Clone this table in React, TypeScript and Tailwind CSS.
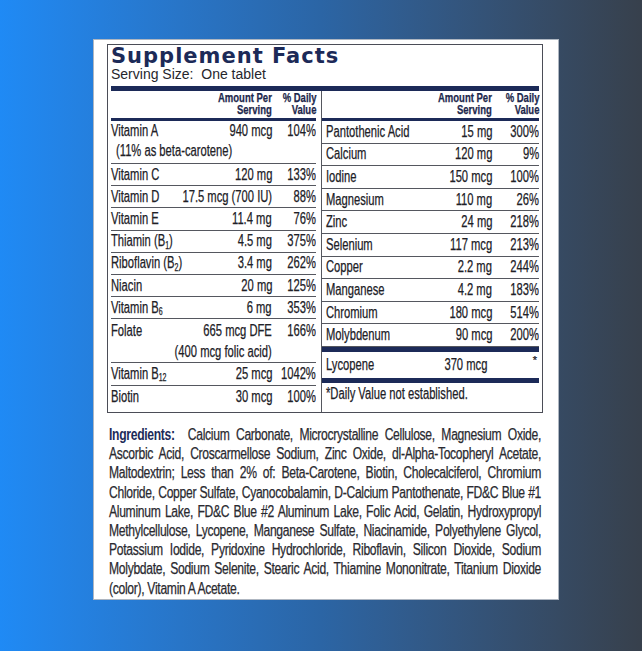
import type { ReactNode } from 'react';

type Nutrient = {
  name: ReactNode;
  amount: string;
  dv: string;
};

const leftRows: Nutrient[] = [
  { name: 'Vitamin C', amount: '120 mg', dv: '133%' },
  { name: 'Vitamin D', amount: '17.5 mcg (700 IU)', dv: '88%' },
  { name: 'Vitamin E', amount: '11.4 mg', dv: '76%' },
  { name: <>Thiamin (B<sub className="text-[10px]">1</sub>)</>, amount: '4.5 mg', dv: '375%' },
  { name: <>Riboflavin (B<sub className="text-[10px]">2</sub>)</>, amount: '3.4 mg', dv: '262%' },
  { name: 'Niacin', amount: '20 mg', dv: '125%' },
  { name: <>Vitamin B<sub className="text-[10px]">6</sub></>, amount: '6 mg', dv: '353%' },
];

const rightRows: Nutrient[] = [
  { name: 'Pantothenic Acid', amount: '15 mg', dv: '300%' },
  { name: 'Calcium', amount: '120 mg', dv: '9%' },
  { name: 'Iodine', amount: '150 mcg', dv: '100%' },
  { name: 'Magnesium', amount: '110 mg', dv: '26%' },
  { name: 'Zinc', amount: '24 mg', dv: '218%' },
  { name: 'Selenium', amount: '117 mcg', dv: '213%' },
  { name: 'Copper', amount: '2.2 mg', dv: '244%' },
  { name: 'Manganese', amount: '4.2 mg', dv: '183%' },
  { name: 'Chromium', amount: '180 mcg', dv: '514%' },
  { name: 'Molybdenum', amount: '90 mcg', dv: '200%' },
];

const ingredientLines = [
  'Ascorbic Acid, Croscarmellose Sodium, Zinc Oxide, dl-Alpha-Tocopheryl Acetate,',
  'Maltodextrin; Less than 2% of: Beta-Carotene, Biotin, Cholecalciferol, Chromium',
  'Chloride, Copper Sulfate, Cyanocobalamin, D-Calcium Pantothenate, FD&C Blue #1',
  'Aluminum Lake, FD&C Blue #2 Aluminum Lake, Folic Acid, Gelatin, Hydroxypropyl',
  'Methylcellulose, Lycopene, Manganese Sulfate, Niacinamide, Polyethylene Glycol,',
  'Potassium Iodide, Pyridoxine Hydrochloride, Riboflavin, Silicon Dioxide, Sodium',
  'Molybdate, Sodium Selenite, Stearic Acid, Thiamine Mononitrate, Titanium Dioxide',
];

// no condensed face is installed, so narrow the glyphs of a cell instead
const Cond = ({ children, right }: { children: ReactNode; right?: boolean }) => (
  <span
    className={`inline-block shrink-0 whitespace-nowrap scale-x-[0.7] ${right ? 'origin-right text-right' : 'origin-left'}`}
  >
    {children}
  </span>
);

const Cells = ({ row, dvWidth }: { row: Nutrient; dvWidth: string }) => (
  <>
    <div className="min-w-0 flex-1">
      <Cond>{row.name}</Cond>
    </div>
    <div className="flex shrink-0 justify-end">
      <Cond right>{row.amount}</Cond>
    </div>
    <div className={`flex shrink-0 justify-end ${dvWidth}`}>
      <Cond right>{row.dv}</Cond>
    </div>
  </>
);

const ColumnHeader = ({ dvWidth }: { dvWidth: string }) => (
  <div className="flex h-[30px] items-start justify-end border-b-[3px] border-[#1c2a58] pt-[1px] text-[12.5px] font-bold leading-[12px] text-[#1c2a58]">
    <div className="flex justify-end">
      <span className="inline-block origin-right scale-x-[0.76] whitespace-nowrap text-right">
        Amount Per
        <br />
        Serving
      </span>
    </div>
    <div className={`flex shrink-0 justify-end ${dvWidth}`}>
      <span className="inline-block origin-right scale-x-[0.76] whitespace-nowrap text-right">
        % Daily
        <br />
        Value
      </span>
    </div>
  </div>
);

const LeftRow = ({ row, last }: { row: Nutrient; last?: boolean }) => (
  <div className={`flex h-[22.2px] items-center leading-[22px] ${last ? '' : 'border-b border-[#55575f]'}`}>
    <Cells row={row} dvWidth="w-[44px]" />
  </div>
);

const RightRow = ({ row }: { row: Nutrient }) => (
  <div className="flex h-[22.6px] items-center border-b border-[#55575f] pl-[4px] leading-[22px]">
    <Cells row={row} dvWidth="w-[47px]" />
  </div>
);

export default function App() {
  return (
    <div className="h-[651px] w-[642px] overflow-hidden bg-linear-to-r from-[#1f8af5] via-[#2b65a5] to-[#37404c] pl-[93px] pt-[39px]">
      <div className="w-[466px] border border-[#aeb6c1] bg-white pb-[1px] pl-[13px] pt-[4px]">
        <div className="w-[436px] border border-[#4b4d57] px-[3px] text-[#202026]">
          <h1 className="pt-[1px] font-['DejaVu_Sans',sans-serif] text-[21px] font-bold leading-[20px] tracking-[1px] text-[#1c2a58]">
            Supplement Facts
          </h1>
          <div className="font-['Liberation_Sans',Arial,sans-serif] text-[14px] leading-[16px] text-[#26262c]">
            Serving Size:&nbsp; One tablet
          </div>
          <div className="mt-[4px] h-[5px] bg-[#1c2a58]" />

          <div className="flex h-[321px] font-['Liberation_Sans',Arial,sans-serif] text-[16px] [-webkit-text-stroke:0.25px_#202026]">
            <div className="w-[211px] border-r border-[#55575f] pr-[5px]">
              <ColumnHeader dvWidth="w-[44px]" />
              <div className="h-[43px] border-b border-[#55575f] leading-[20px]">
                <div className="flex">
                  <Cells row={{ name: 'Vitamin A', amount: '940 mcg', dv: '104%' }} dvWidth="w-[44px]" />
                </div>
                <div className="pl-[5px]">
                  <Cond>(11% as beta-carotene)</Cond>
                </div>
              </div>
              {leftRows.map((row, i) => (
                <LeftRow key={i} row={row} />
              ))}
              <div className="h-[44px] border-b border-[#55575f] pt-[1px] leading-[21px]">
                <div className="flex">
                  <Cells row={{ name: 'Folate', amount: '665 mcg DFE', dv: '166%' }} dvWidth="w-[44px]" />
                </div>
                <div className="flex justify-end pr-[44px]">
                  <Cond right>(400 mcg folic acid)</Cond>
                </div>
              </div>
              <LeftRow row={{ name: <>Vitamin B<sub className="text-[10px]">12</sub></>, amount: '25 mcg', dv: '1042%' }} />
              <LeftRow row={{ name: 'Biotin', amount: '30 mcg', dv: '100%' }} last />
            </div>

            <div className="flex-1">
              <ColumnHeader dvWidth="w-[47px]" />
              {rightRows.map((row, i) => (
                <RightRow key={i} row={row} />
              ))}
              <div className="h-[5px] bg-[#1c2a58]" />
              <div className="flex h-[26px] items-center pl-[4px] leading-[26px]">
                <Cells row={{ name: 'Lycopene', amount: '370 mcg', dv: '' }} dvWidth="w-[47px]" />
                <span className="relative -left-[2px] -top-[5px] text-[11px]">*</span>
              </div>
              <div className="h-[5px] bg-[#1c2a58]" />
              <div className="pl-[4px] pt-[1px] leading-[20px]">
                <Cond>*Daily Value not established.</Cond>
              </div>
            </div>
          </div>
        </div>

        <div className="ml-[2px] mt-[12px] w-[432px] font-['Liberation_Sans',Arial,sans-serif] text-[16px] leading-[19.2px] tracking-[-0.4px] text-[#2a2a30] [-webkit-text-stroke:0.25px_#2a2a30]">
          <div className="w-[570px] origin-left scale-x-[0.758]">
            <div className="whitespace-nowrap text-justify [text-align-last:justify]">
              <span className="font-bold text-[#1c2a58] [-webkit-text-stroke:0px]">Ingredients:</span>&nbsp; Calcium
              Carbonate, Microcrystalline Cellulose, Magnesium Oxide,
            </div>
            {ingredientLines.map((line) => (
              <div key={line} className="whitespace-nowrap text-justify [text-align-last:justify]">
                {line}
              </div>
            ))}
            <div className="whitespace-nowrap">(color), Vitamin A Acetate.</div>
          </div>
        </div>
      </div>
    </div>
  );
}
